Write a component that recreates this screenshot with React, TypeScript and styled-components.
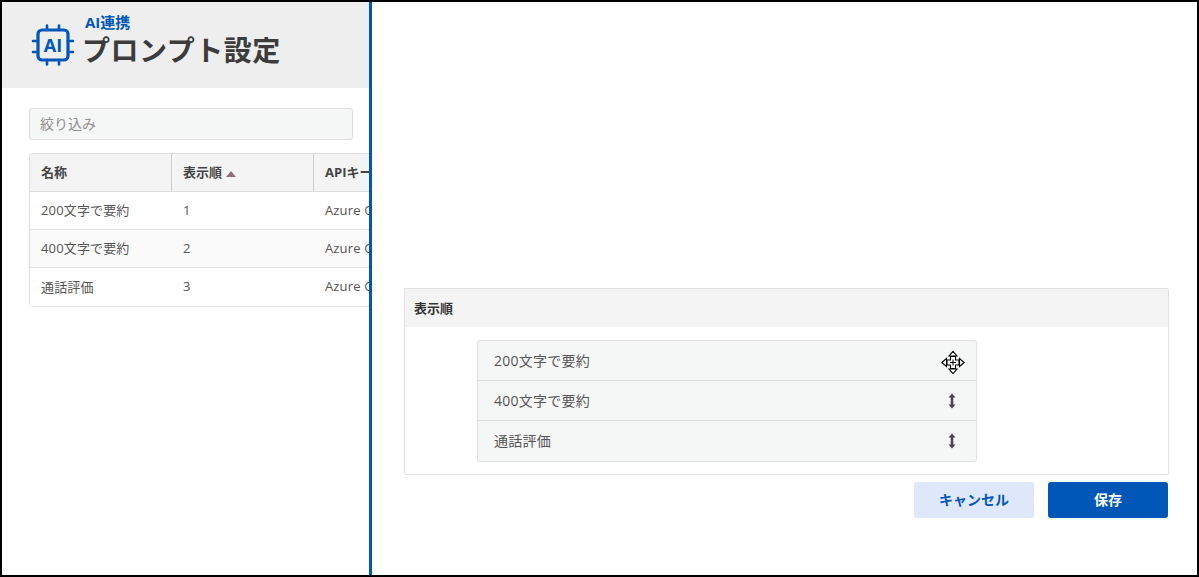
import React from "react";
import styled, { createGlobalStyle } from "styled-components";

const FONT = `"Open Sans", "Noto Sans CJK JP", sans-serif`;
const BLUE = "#0057b7";

const GlobalStyle = createGlobalStyle`
  html, body {
    margin: 0;
    padding: 0;
    background: #fff;
  }
  * {
    box-sizing: border-box;
  }
`;

const rows = [
  { name: "200文字で要約", order: 1, api: "Azure OpenAI" },
  { name: "400文字で要約", order: 2, api: "Azure OpenAI" },
  { name: "通話評価", order: 3, api: "Azure OpenAI" },
];

const ChipIcon = () => (
  <svg width="44" height="44" viewBox="0 0 44 44" fill="none">
    <rect x="7" y="7" width="30" height="30" rx="4" stroke={BLUE} strokeWidth="3.2" />
    <g stroke={BLUE} strokeWidth="2.6" strokeLinecap="round">
      <path d="M16 2.5V7M28 2.5V7M16 37V41.5M28 37V41.5" />
      <path d="M2 18H7M2 29H7M37 18H42M37 29H42" />
    </g>
    <text x="22" y="28.5" textAnchor="middle" fontFamily="Open Sans, sans-serif" fontWeight="700" fontSize="18" fill={BLUE}>
      AI
    </text>
  </svg>
);

const UpDownIcon = () => (
  <svg width="10" height="16" viewBox="0 0 10 16">
    <path d="M5 2V14" stroke="#4a4550" strokeWidth="2.6" />
    <path d="M5 0.5L8.5 4.5H1.5ZM5 15.5L1.5 11.5H8.5Z" fill="#4a4550" />
  </svg>
);

const MoveCursor = () => (
  <svg width="24" height="24" viewBox="0 0 24 24">
    <path
      d="M9.5 6H14.5V9.5H18V14.5H14.5V18H9.5V14.5H6V9.5H9.5Z"
      fill="#fff"
      stroke="#000"
      strokeWidth="1.1"
    />
    <path d="M12 9V15M9 12H15" stroke="#000" strokeWidth="1" />
    <path
      d="M12 0.8L16 5.5H8ZM12 23.2L8 18.5H16ZM0.8 12L5.5 8V16ZM23.2 12L18.5 16V8Z"
      fill="#fff"
      stroke="#000"
      strokeWidth="1.1"
    />
  </svg>
);

export default function App() {
  return (
    <Page>
      <GlobalStyle />
      <Header>
        <ChipIcon />
        <HeaderText>
          <Category>AI連携</Category>
          <Title>プロンプト設定</Title>
        </HeaderText>
      </Header>

      <Content>
        <FilterInput placeholder="絞り込み" />
        <Table>
          <thead>
            <tr>
              <Th>名称</Th>
              <Th>
                表示順<SortMark />
              </Th>
              <Th>APIキー</Th>
            </tr>
          </thead>
          <tbody>
            {rows.map((row) => (
              <Tr key={row.order}>
                <Td>{row.name}</Td>
                <Td>{row.order}</Td>
                <Td>{row.api}</Td>
              </Tr>
            ))}
          </tbody>
        </Table>
      </Content>

      <Drawer>
        <Panel>
          <PanelHeader>表示順</PanelHeader>
          <PanelBody>
            <SortList>
              {rows.map((row, i) => (
                <SortRow key={row.order}>
                  <RowLabel>{row.name}</RowLabel>
                  <Handle>{i === 0 ? <MoveCursor /> : <UpDownIcon />}</Handle>
                </SortRow>
              ))}
            </SortList>
          </PanelBody>
        </Panel>
        <Actions>
          <CancelButton>キャンセル</CancelButton>
          <SaveButton>保存</SaveButton>
        </Actions>
      </Drawer>
    </Page>
  );
}

const Page = styled.div`
  position: relative;
  width: 1199px;
  height: 577px;
  border: 2px solid #000;
  overflow: hidden;
  background: #fff;
  font-family: ${FONT};
  color: #444;
`;

const Header = styled.header`
  height: 86px;
  padding: 0 0 0 29px;
  display: flex;
  align-items: center;
  gap: 7px;
  background: #eeeeee;
`;

const HeaderText = styled.div`
  display: flex;
  flex-direction: column;
  margin-top: -9px;
`;

const Category = styled.div`
  margin: 0 0 2px 3px;
  font-size: 15px;
  line-height: 16px;
  font-weight: 700;
  color: ${BLUE};
`;

const Title = styled.h1`
  margin: 0;
  font-size: 28px;
  line-height: 36px;
  font-weight: 700;
  letter-spacing: 0.5px;
  color: #3c3c3c;
`;

const Content = styled.main`
  padding: 20px 0 0 27px;
`;

const FilterInput = styled.input`
  display: block;
  width: 324px;
  height: 32px;
  padding: 0 10px 2px;
  background: #f5f6f6;
  border: 1px solid #dddddd;
  border-radius: 3px;
  font-family: ${FONT};
  font-size: 14px;

  &::placeholder {
    color: #8f8f8f;
    opacity: 1;
  }
`;

const Table = styled.table`
  margin-top: 13px;
  width: 1140px;
  table-layout: fixed;
  border-collapse: separate;
  border-spacing: 0;
  border: 1px solid #dddddd;
  border-radius: 4px;
  font-size: 13px;
`;

const Th = styled.th`
  width: 142px;
  height: 38px;
  padding: 0 11px 2px;
  background: #f4f4f4;
  border-bottom: 1px solid #dddddd;
  border-right: 1px solid #cccccc;
  text-align: left;
  font-weight: 700;
  color: #444;

  &:first-child {
    border-top-left-radius: 4px;
  }
  &:last-child {
    width: auto;
    border-right: none;
  }
`;

const SortMark = styled.span`
  display: inline-block;
  margin-left: 4px;
  border-left: 5px solid transparent;
  border-right: 5px solid transparent;
  border-bottom: 6px solid #8e6f7c;
`;

const Tr = styled.tr`
  background: #fff;

  &:nth-child(even) {
    background: #fafafa;
  }
`;

const Td = styled.td`
  height: 38px;
  padding: 0 11px 2px;
  border-bottom: 1px solid #e2e2e2;
  color: #555;
  letter-spacing: 0.15px;

  tr:last-child > & {
    border-bottom: none;
  }
`;

const Drawer = styled.aside`
  position: absolute;
  top: 0;
  bottom: 0;
  left: 367px;
  right: 0;
  display: flex;
  flex-direction: column;
  justify-content: flex-end;
  padding: 0 28px 57px 32px;
  background: #fff;
  border-left: 3px solid ${BLUE};
`;

const Panel = styled.section`
  border: 1px solid #e0e0e0;
  border-radius: 2px;
`;

const PanelHeader = styled.div`
  height: 38px;
  padding: 0 9px 2px;
  display: flex;
  align-items: center;
  background: #f4f4f4;
  font-size: 13px;
  font-weight: 700;
  color: #333;
`;

const PanelBody = styled.div`
  padding: 13px 72px 12px;
  display: flex;
`;

const SortList = styled.ul`
  margin: 0;
  padding: 0;
  width: 500px;
  list-style: none;
  background: #f5f6f6;
  border: 1px solid #e0e0e0;
  border-radius: 3px;
`;

const SortRow = styled.li`
  height: 40px;
  padding: 0 16px;
  display: flex;
  align-items: center;
  justify-content: space-between;
  font-size: 14px;
  letter-spacing: 0.25px;
  color: #555;

  &:first-child {
    height: 39px;
  }
  &:last-child {
    height: 41px;
  }
  & + & {
    border-top: 1px solid #dedede;
  }
`;

const RowLabel = styled.span`
  position: relative;
  top: -1px;
`;

const Handle = styled.span`
  width: 24px;
  height: 24px;
  margin-right: -4px;
  display: flex;
  justify-content: center;
  align-items: center;

  li:first-child > & {
    transform: translate(1px, 1.5px);
  }
`;

const Actions = styled.div`
  margin-top: 7px;
  display: flex;
  justify-content: flex-end;
  gap: 14px;
  padding-right: 1px;
`;

const BaseButton = styled.button`
  width: 120px;
  height: 36px;
  padding: 0 0 2px;
  border: none;
  border-radius: 3px;
  font-family: ${FONT};
  font-size: 14px;
  font-weight: 700;
`;

const CancelButton = styled(BaseButton)`
  background: #dfe7fb;
  color: ${BLUE};
`;

const SaveButton = styled(BaseButton)`
  background: ${BLUE};
  color: #fff;
`;
